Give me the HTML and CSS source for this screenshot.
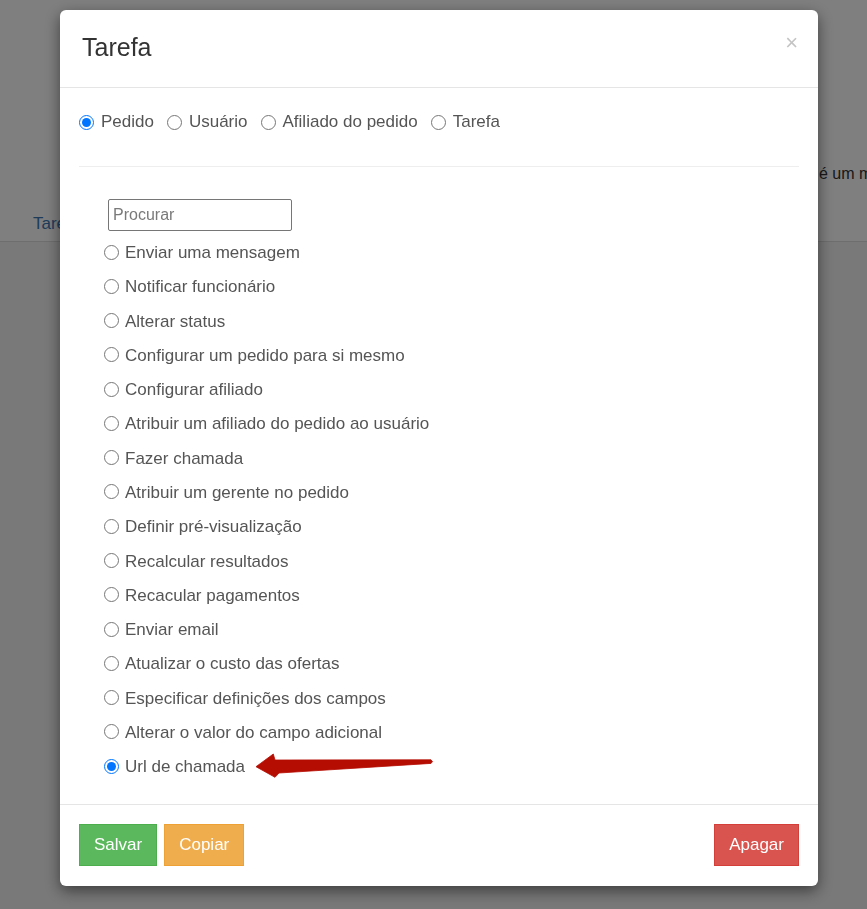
FILE: index.html
```html
<html>
<head>
	<link rel="stylesheet" href="styles.css">
</head>
<body>
	<div class="page">
		<div class="page-top">
			<p class="page-note">é um m</p>
			<div class="page-tabs"><a href="#">Tarefas</a></div>
		</div>
		<div class="page-rest"></div>
	</div>

	<div class="overlay">
		<div class="modal">
			<div class="modal-header">
				<h4 class="modal-title">Tarefa</h4>
				<span class="close">×</span>
			</div>

			<div class="modal-body">
				<div class="types">
					<label><input type="radio" name="type" checked/>Pedido</label>
					<label><input type="radio" name="type"/>Usuário</label>
					<label><input type="radio" name="type"/>Afiliado do pedido</label>
					<label><input type="radio" name="type"/>Tarefa</label>
				</div>

				<hr class="sep"/>

				<div class="actions">
					<input class="search" type="text" placeholder="Procurar"/>
					<label class="action"><input type="radio" name="action"/>Enviar uma mensagem</label>
					<label class="action"><input type="radio" name="action"/>Notificar funcionário</label>
					<label class="action"><input type="radio" name="action"/>Alterar status</label>
					<label class="action"><input type="radio" name="action"/>Configurar um pedido para si mesmo</label>
					<label class="action"><input type="radio" name="action"/>Configurar afiliado</label>
					<label class="action"><input type="radio" name="action"/>Atribuir um afiliado do pedido ao usuário</label>
					<label class="action"><input type="radio" name="action"/>Fazer chamada</label>
					<label class="action"><input type="radio" name="action"/>Atribuir um gerente no pedido</label>
					<label class="action"><input type="radio" name="action"/>Definir pré-visualização</label>
					<label class="action"><input type="radio" name="action"/>Recalcular resultados</label>
					<label class="action"><input type="radio" name="action"/>Recacular pagamentos</label>
					<label class="action"><input type="radio" name="action"/>Enviar email</label>
					<label class="action"><input type="radio" name="action"/>Atualizar o custo das ofertas</label>
					<label class="action"><input type="radio" name="action"/>Especificar definições dos campos</label>
					<label class="action"><input type="radio" name="action"/>Alterar o valor do campo adicional</label>
					<label class="action"><input type="radio" name="action" checked/>Url de chamada</label>
				</div>

				<svg class="arrow" width="190" height="30" viewBox="0 0 190 30">
					<polygon points="1,17.7 18.3,5 20,11 176,10.8 177.5,12.6 176,14.4 24,24 20,28.3" fill="#b50d02" stroke="#b50d02" stroke-width="0.8" stroke-linejoin="round"/>
				</svg>
			</div>

			<div class="modal-footer">
				<button class="btn btn-success">Salvar</button>
				<button class="btn btn-warning">Copiar</button>
				<span class="spacer"></span>
				<button class="btn btn-danger">Apagar</button>
			</div>
		</div>
	</div>
</body>
</html>
```

FILE: styles.css
```css
body{
	margin:0;
	font-family: "Liberation Sans", Arial, sans-serif;
	overflow: hidden;
}

.page-top{
	height: 242px;
	padding-top: 164px;
	box-sizing: border-box;
	background: #fff;
	border-bottom: 1px solid #ddd;
}
.page-note{
	margin: 0;
	padding-left: 819px;
	white-space: nowrap;
	font-size: 16px;
	line-height: 20px;
	color: #333;
}
.page-tabs{
	padding: 30px 0 0 33px;
}
.page-tabs a{
	font-size: 17px;
	line-height: 20px;
	color: #3d79b5;
	text-decoration: none;
}
.page-rest{
	height: 700px;
	background: #f3f3f3;
}

.overlay{
	position: fixed;
	left:0;
	top:0;
	right:0;
	bottom:0;
	background: rgba(0,0,0,.5);
}

.modal{
	position: relative;
	width: 758px;
	margin: 10px 0 0 60px;
	background: #fff;
	border-radius: 6px;
	box-shadow: 0 5px 15px rgba(0,0,0,.5);
	color: #555;
}

.modal-header{
	display: flex;
	justify-content: space-between;
	align-items: flex-start;
	padding: 21px 20px 23px 22px;
	border-bottom: 1px solid #e5e5e5;
}
.modal-title{
	margin: 0;
	font-size: 25px;
	line-height: 33px;
	font-weight: normal;
	color: #333;
}
.close{
	font-size: 22px;
	line-height: 22px;
	color: #c4c4c4;
	margin-top: 1px;
	margin-right: 0;
}

.modal-body{
	position: relative;
	padding: 22px 19px 20px 19px;
	font-size: 17px;
}

.types{
	display: flex;
	line-height: 24px;
}
.types label{
	display: flex;
	align-items: center;
	margin-right: 13px;
}
.types input{
	width: 15px;
	height: 15px;
	margin: 0 7px 0 0;
}

.sep{
	margin: 32px 0 32px 0;
	border: 0;
	border-top: 1px solid #eee;
}

.actions{
	padding-left: 25px;
}
.search{
	display: block;
	width: 184px;
	height: 32px;
	box-sizing: border-box;
	margin: 0 0 5px 4px;
	padding: 0 4px;
	border: 1px solid #767676;
	border-radius: 2px;
	font-family: inherit;
	font-size: 16px;
	color: #555;
}
.search::placeholder{
	color: #7a7a7a;
}
.action{
	display: flex;
	align-items: center;
	height: 34.27px;
}
.action input{
	width: 15px;
	height: 15px;
	margin: -2px 6px 0 0;
}

.arrow{
	position: absolute;
	left: 195px;
	top: 661px;
}

.modal-footer{
	display: flex;
	padding: 19px 19px 20px 19px;
	border-top: 1px solid #e5e5e5;
}
.spacer{
	flex: 1;
}
.btn{
	height: 42px;
	padding: 0 14px;
	margin-right: 7px;
	border: 1px solid transparent;
	font-family: inherit;
	font-size: 17px;
	color: #fff;
}
.btn:last-child{
	margin-right: 0;
}
.btn-success{
	background: #5cb85c;
	border-color: #4cae4c;
}
.btn-warning{
	background: #f0ad4e;
	border-color: #eea236;
}
.btn-danger{
	background: #d9534f;
	border-color: #d43f3a;
}
```
